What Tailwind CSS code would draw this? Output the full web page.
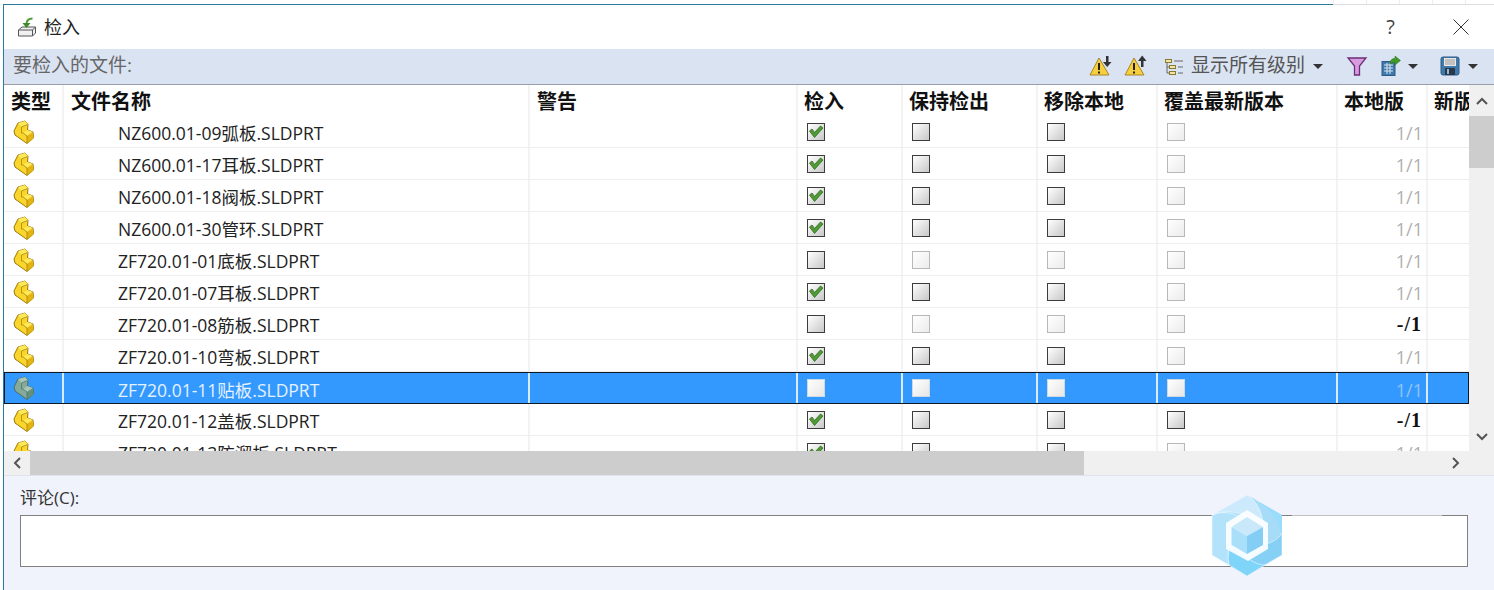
<!DOCTYPE html>
<html lang="zh-CN">
<head>
  <meta charset="utf-8"/>
  <title>检入</title>
  <script src="https://cdn.jsdelivr.net/npm/@tailwindcss/browser@4"></script>
</head>
<body class="bg-white">
  <div class="relative w-[1494px] h-[590px] overflow-hidden bg-white text-[#222] font-['Open_Sans','Noto_Sans_CJK_SC',sans-serif]">
    <!-- sliver of the window behind -->
    <div class="flex h-[5px]">
      <div class="w-[1330px] ml-[3px] border-b border-[#2b7a9e]"></div>
      <div class="flex-1 flex border-b border-[#ddd]">
        <div class="w-[33px] border-l border-[#eee]"></div>
        <div class="w-[33px] border-l border-[#eee]"></div>
        <div class="w-[33px] border-l border-[#eee]"></div>
        <div class="w-[33px] border-l border-[#eee]"></div>
        <div class="w-[29px] border-l border-[#eee]"></div>
      </div>
    </div>

    <div class="ml-[3px] border-l border-[#2b7a9e] h-[585px] flex flex-col">
      <!-- title bar -->
      <div class="h-[44px] flex items-center shrink-0 pl-[13px]">
        <svg width="22" height="22" viewBox="0 0 22 22">
          <path d="M1.500 14 L5 11 H18.500 V17 L15.500 20 H1.500 Z" fill="#f1f1f1" stroke="#555"/>
          <path d="M1.500 14 H15.500 V20 M15.500 14 L18.500 11" fill="none" stroke="#555"/>
          <path d="M15.500 2.500 C11.500 2.500 9.500 4.500 9.500 8" fill="none" stroke="#4b9a2e" stroke-width="2"/>
          <path d="M5.500 7 L9.500 12 L13.500 7 Z" fill="#3f8a26"/>
        </svg>
        <span class="ml-[5px] text-[18px] leading-none">检入</span>
        <span class="ml-auto mr-[58px] text-[20px] leading-none text-[#444]">?</span>
        <svg class="mr-[25px]" width="16" height="16" viewBox="0 0 16 16"><path d="M.5 .5 L15.500 15.500 M15.500 .5 L.5 15.500" stroke="#333" fill="none"/></svg>
      </div>

      <!-- toolbar -->
      <div class="h-[36px] shrink-0 bg-[#dae3f2] border-b border-[#9a9fa6] flex items-center pl-[9px] pb-[2px] text-[#666] text-[19px]">
        <span>要检入的文件:</span>
        <div class="ml-auto flex items-center text-[#555]">
          <svg width="24" height="24" viewBox="0 0 24 24">
            <path d="M10 4 L20 21 H1 Z" fill="#f7cf3c" stroke="#a8862a"/><path d="M10 9 V16 M10 17.500 V19.500" stroke="#222" stroke-width="2"/>
            <path d="M17 2 H19.500 V8 H22.500 L18.200 13 L14 8 H17 Z" fill="#333"/>
          </svg>
          <svg class="ml-[11px]" width="24" height="24" viewBox="0 0 24 24">
            <path d="M10 4 L20 21 H1 Z" fill="#f7cf3c" stroke="#a8862a"/><path d="M10 9 V16 M10 17.500 V19.500" stroke="#222" stroke-width="2"/>
            <path d="M17 13 H19.500 V7 H22.500 L18.200 1.500 L14 7 H17 Z" fill="#333"/>
          </svg>
          <svg class="ml-[16px]" width="20" height="20" viewBox="0 0 20 20">
            <rect x="1.500" y="3.500" width="6" height="3" fill="#f3e6a0" stroke="#8a7a30"/>
            <rect x="5.500" y="9.500" width="6" height="3" fill="#f3e6a0" stroke="#8a7a30"/>
            <rect x="5.500" y="15.500" width="6" height="3" fill="#f3e6a0" stroke="#8a7a30"/>
            <path d="M3 7 V17 H5 M3 11 H5 M10 5 H19 M14 11 H19 M14 17 H19" fill="none" stroke="#666"/>
          </svg>
          <span class="ml-[7px]">显示所有级别</span>
          <span class="ml-[8px] mt-[2px] w-0 h-0 border-x-[5px] border-x-transparent border-t-[5px] border-t-[#333]"></span>
          <svg class="ml-[23px]" width="22" height="22" viewBox="0 0 22 22">
            <path d="M2 3 H20 L13.500 11 V20 H8.500 V11 Z" fill="#d99be0" stroke="#6b2f78" stroke-width="1.300"/>
          </svg>
          <svg class="ml-[12px]" width="22" height="22" viewBox="0 0 22 22">
            <rect x="2" y="6.500" width="13" height="14" fill="#3f79ab" stroke="#2b5a86"/>
            <path d="M4 10 H13 M4 13 H13 M4 16 H13 M7 8 V19 M10 8 V19" stroke="#d9e6f2"/>
            <path d="M10 9 C10 5 12 3.500 15 3.500 V1 L20.500 5.500 L15 10 V7.500 C13 7.500 11.500 8 10 9 Z" fill="#3f9a2a" stroke="#2a6b1a" stroke-width=".5"/>
          </svg>
          <span class="ml-[6px] mt-[2px] w-0 h-0 border-x-[5px] border-x-transparent border-t-[5px] border-t-[#333]"></span>
          <svg class="ml-[22px]" width="20" height="20" viewBox="0 0 20 20">
            <rect x="1" y="1" width="18" height="18" rx="2" fill="#3f79ab" stroke="#2b5a86"/>
            <rect x="4" y="2" width="12" height="8" fill="#e8e8e8"/>
            <path d="M5 4 H15 M5 6 H15 M5 8 H15" stroke="#999"/>
            <rect x="5" y="12" width="10" height="7" fill="#26384a"/>
            <rect x="7" y="13" width="2" height="5" fill="#9fb4c6"/>
          </svg>
          <span class="ml-[8px] mt-[2px] mr-[16px] w-0 h-0 border-x-[5px] border-x-transparent border-t-[5px] border-t-[#333]"></span>
        </div>
      </div>

      <!-- table and scrollbars -->
      <div class="h-[390px] shrink-0 flex flex-col overflow-hidden">
        <div class="flex h-[366px] shrink-0">
          <div class="w-[1466px] overflow-hidden">
            <div class="grid grid-cols-[60px_466px_268px_105px_135px_120px_180px_90px_42px] h-[31px] text-[20px] leading-[33px] font-bold text-[#111]">
              <div class="px-[7px] border-r-2 border-[#f3f3f3]">类型</div>
              <div class="px-[7px] border-r-2 border-[#f3f3f3]">文件名称</div>
              <div class="px-[7px] border-r-2 border-[#f3f3f3]">警告</div>
              <div class="px-[6px] border-r-2 border-[#f3f3f3]">检入</div>
              <div class="px-[6px] border-r-2 border-[#f3f3f3]">保持检出</div>
              <div class="px-[6px] border-r-2 border-[#f3f3f3]">移除本地</div>
              <div class="px-[6px] border-r-2 border-[#f3f3f3]">覆盖最新版本</div>
              <div class="px-[6px] border-r-2 border-[#f3f3f3]">本地版</div>
              <div class="pl-[6px] w-[42px] overflow-hidden whitespace-nowrap">新版</div>
            </div>
            <div id="rows"></div>
          </div>
          <!-- vertical scrollbar -->
          <div class="w-[25px] bg-[#f0f0f0] flex flex-col items-center">
            <div class="h-[31px] w-full flex items-center justify-center">
              <svg width="12" height="8" viewBox="0 0 12 8"><path d="M1 7 L6 2 L11 7" fill="none" stroke="#555" stroke-width="2"/></svg>
            </div>
            <div class="h-[52px] w-full bg-[#cdcdcd]"></div>
            <div class="flex-1"></div>
            <div class="h-[28px] w-full flex items-center justify-center">
              <svg width="12" height="8" viewBox="0 0 12 8"><path d="M1 1 L6 6 L11 1" fill="none" stroke="#555" stroke-width="2"/></svg>
            </div>
          </div>
        </div>
        <!-- horizontal scrollbar -->
        <div class="h-[24px] shrink-0 bg-[#f0f0f0] flex items-center">
          <div class="w-[26px] flex justify-center">
            <svg width="8" height="12" viewBox="0 0 8 12"><path d="M7 1 L2 6 L7 11" fill="none" stroke="#555" stroke-width="2"/></svg>
          </div>
          <div class="w-[1054px] h-full bg-[#cdcdcd]"></div>
          <div class="flex-1"></div>
          <div class="w-[42px]">
            <svg width="8" height="12" viewBox="0 0 8 12"><path d="M1 1 L6 6 L1 11" fill="none" stroke="#555" stroke-width="2"/></svg>
          </div>
        </div>
      </div>

      <!-- comment -->
      <div class="flex-1 bg-[#f0f3fb] border-t border-[#dfe3ea] pl-[16px] pr-[26px] pt-[12px]">
        <div class="text-[17px] leading-[20px] text-[#333]">评论(C):</div>
        <div class="mt-[7px] h-[52px] bg-white border border-[#808080]"></div>
      </div>
    </div>

    <!-- watermark over the dialog -->
    <svg class="absolute left-[1211px] top-[495px]" width="72" height="82" viewBox="0 0 72 82">
      <path d="M36 0 L71 20 V60 L36 81 L1 60 V20 Z" fill="#a6dcf8"/>
      <path d="M36 0 L71 20 V42 C68 24 54 8 36 0 Z" fill="#9adcfb"/>
      <path d="M71 38 V60 L52 71 C46 70 42 68 38 64 L52 50 C60 48 68 44 71 38 Z" fill="#86d0f5" stroke="#fff" stroke-width=".5"/>
      <path d="M36 81 L18 70 C16 62 17 56 20 50 L38 64 C42 67 48 70 54 70 Z" fill="#7fd4fa" stroke="#fff" stroke-width=".5"/>
      <path d="M1 60 V20 C10 16 20 17 30 22 L20 32 V50 C17 56 16 62 18 70 Z" fill="#b3e2fb" stroke="#fff" stroke-width=".5"/>
      <path d="M1 20 L36 0 C46 6 52 18 52 32 L36 22 C26 16 12 15 1 20 Z" fill="#cdeafc" stroke="#fff" stroke-width=".5"/>
      <path d="M36 15 L57 28 V54 L37 66 L15 54 V28 Z" fill="#fff" opacity=".9"/>
      <path d="M36 22 L52 32 L36 41 L20.500 32 Z" fill="#c9e9fb"/>
      <path d="M20.500 32 L36 41 V59 L20.500 50 Z" fill="#aadffa"/>
      <path d="M52 32 L36 41 V59 L52 50 Z" fill="#84cdf4"/>
    </svg>
    <div class="absolute left-[1292px] top-[515px] w-[150px] h-[2px] bg-white/50"></div>
  </div>

  <script>
    // status: 1 ticked, 0 empty, d disabled, s on the selected row
    const data = [
      ["NZ600.01-09弧板", 1, 0, 0, "d", "1/1"],
      ["NZ600.01-17耳板", 1, 0, 0, "d", "1/1"],
      ["NZ600.01-18阀板", 1, 0, 0, "d", "1/1"],
      ["NZ600.01-30管环", 1, 0, 0, "d", "1/1"],
      ["ZF720.01-01底板", 0, "d", "d", "d", "1/1"],
      ["ZF720.01-07耳板", 1, 0, 0, "d", "1/1"],
      ["ZF720.01-08筋板", 0, "d", "d", "d", "-/1"],
      ["ZF720.01-10弯板", 1, 0, 0, "d", "1/1"],
      ["ZF720.01-11贴板", "s", "s", "s", "s", "1/1"],
      ["ZF720.01-12盖板", 1, 0, 0, 0, "-/1"],
      ["ZF720.01-13防溜板", 1, 0, 0, "d", "1/1"]
    ];

    function partIcon(sel) {
      const c = sel
        ? ["#a9c6b6", "#86a998", "#65907e", "#456f6a"]
        : ["#ffe85a", "#fbd52a", "#e3b412", "#97780f"];
      return `<svg width="22" height="24" viewBox="0 0 22 24">
        <path d="M1 11 L5 3 L12 1 L15 4.500 L14.500 10 L20 12 L20.500 18 L14 23.500 L2 15 Z" fill="${c[1]}" stroke="${c[3]}"/>
        <path d="M5 3 L12 1 L15 4.500 L8.500 7 Z M14.500 10 L20 12 L14 16 L10 13 Z" fill="${c[0]}"/>
        <path d="M14 16 L20 12 L20.500 18 L14 23.500 Z" fill="${c[2]}"/>
        <path d="M8.500 7 L14.500 4.500 M8.500 7 V13 M10 13 L14 16 V23 M8.500 13 L10 13" fill="none" stroke="${c[3]}" stroke-width=".7"/>
      </svg>`;
    }

    function box(v) {
      if (v === "s") return `<div class="w-[18px] h-[18px] border border-[#cfd8e4] bg-gradient-to-br from-white to-[#e6e6e6]"></div>`;
      if (v === "d") return `<div class="w-[18px] h-[18px] border border-[#b8b8b8] bg-gradient-to-br from-white to-[#ececec]"></div>`;
      const tick = v === 1 ? `<svg width="16" height="16" viewBox="0 0 16 16"><path d="M1.500 7 L4 5 L6.500 8.500 L12.500 2 L15 4 L6.500 13.500 Z" fill="#4f9a33" stroke="#2f6b1f" stroke-width=".8"/></svg>` : "";
      return `<div class="w-[18px] h-[18px] border border-[#3c3c3c] bg-gradient-to-br from-white to-[#c8c8c8]">${tick}</div>`;
    }

    document.getElementById("rows").innerHTML = data.map((r) => {
      const sel = r[1] === "s";
      const bold = r[5] === "-/1";
      const rowCls = sel
        ? "bg-[#3399ff] text-[#e4f1ff] outline outline-1 -outline-offset-1 outline-[#101828]"
        : "border-b border-[#eeeeee]";
      const cell = sel ? "border-r-2 border-[#d6ecff]" : "border-r-2 border-[#f3f3f3]";
      const ver = bold
        ? "text-[#111] font-bold font-['Liberation_Serif',serif] text-[20px] tracking-[1px] pr-[4px]"
        : sel ? "text-[#8fc3f5] text-[18px] pt-[4px] pr-[3px]" : "text-[#b0b0b0] text-[18px] pt-[4px] pr-[3px]";
      return `<div class="grid grid-cols-[60px_466px_268px_105px_135px_120px_180px_90px_42px] h-[32px] ${rowCls}">
        <div class="${cell} flex items-center pl-[9px]">${partIcon(sel)}</div>
        <div class="${cell} flex items-center pl-[54px] pt-[4px] text-[17.5px] whitespace-nowrap">${r[0]}.SLDPRT</div>
        <div class="${cell}"></div>
        <div class="${cell} flex items-center pl-[9px]">${box(r[1])}</div>
        <div class="${cell} flex items-center pl-[9px]">${box(r[2])}</div>
        <div class="${cell} flex items-center pl-[9px]">${box(r[3])}</div>
        <div class="${cell} flex items-center pl-[9px]">${box(r[4])}</div>
        <div class="${cell} flex items-center justify-end ${ver}">${r[5]}</div>
        <div></div>
      </div>`;
    }).join("");
  </script>
</body>
</html>
